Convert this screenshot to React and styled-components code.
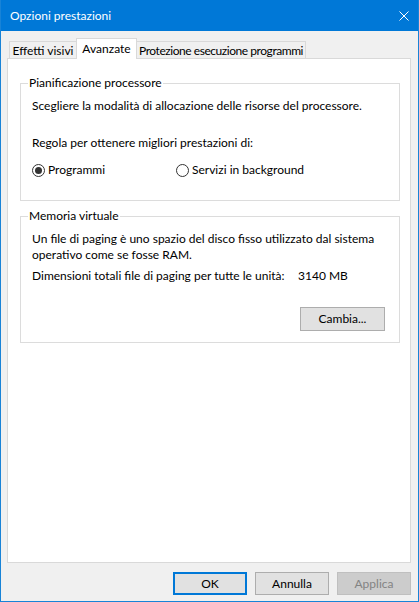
import React from "react";
import styled, { createGlobalStyle, css } from "styled-components";

const UI_FONT = `Lato, "Noto Sans", "Liberation Sans", sans-serif`;

const GlobalStyle = createGlobalStyle`
  * { box-sizing: border-box; }
  html, body { margin: 0; padding: 0; background: #f0f0f0; }
  body { font-family: ${UI_FONT}; font-size: 12px; color: #000; }
`;

const Window = styled.div`
  width: 419px;
  height: 602px;
  display: flex;
  flex-direction: column;
  background: #f0f0f0;
  border: 1px solid #1883d7;
  border-top: none;
`;

const TitleBar = styled.div`
  height: 31px;
  flex: none;
  display: flex;
  align-items: center;
  justify-content: space-between;
  padding-left: 9px;
  background: #0078d7;
  color: #fff;
  line-height: 16px;
`;

const CloseButton = styled.div`
  width: 29px;
  height: 31px;
  display: flex;
  align-items: center;
  justify-content: center;
`;

const Body = styled.div`
  flex: 1;
  display: flex;
  flex-direction: column;
  padding: 7px 7px 0 6px;
`;

const TabRow = styled.div`
  height: 20px;
  display: flex;
  align-items: flex-end;
  padding-left: 2px;
`;

const Tab = styled.div`
  width: ${({ $w }) => $w}px;
  height: 17px;
  padding-top: 1px;
  line-height: 16px;
  letter-spacing: ${({ $tight }) => ($tight ? "-0.45px" : "normal")};
  text-align: center;
  white-space: nowrap;
  overflow: hidden;
  background: #f0f0f0;
  border: 1px solid #d9d9d9;
  border-bottom: none;
  & + & { margin-left: -1px; }

  ${({ $active }) =>
    $active &&
    css`
      height: 21px;
      padding-top: 2px;
      margin-bottom: -1px;
      background: #fff;
      position: relative;
      z-index: 1;
    `}
`;

const Panel = styled.div`
  flex: 1;
  display: flex;
  flex-direction: column;
  gap: 8px;
  background: #fff;
  border: 1px solid #d9d9d9;
  padding: 17px 10px 0 12px;
`;

const Group = styled.fieldset`
  margin: 0;
  border: 1px solid #dcdcdc;
  padding: 8px 14px ${({ $pb }) => $pb}px 11px;
  min-width: 0;
`;

const Legend = styled.legend`
  padding: 0 1px;
  margin-left: -4px;
  line-height: 14px;
`;

const Text = styled.div`
  line-height: 16px;
  margin-top: ${({ $mt }) => $mt || 0}px;
  white-space: nowrap;
`;

const RadioRow = styled.div`
  display: flex;
  margin-top: 11px;
  line-height: 16px;
`;

const RadioLabel = styled.label`
  width: 144px;
  display: flex;
  align-items: center;
  gap: 3px;
  white-space: nowrap;
`;

const RadioCircle = styled.span`
  width: 13px;
  height: 13px;
  flex: none;
  border: 1px solid #333;
  border-radius: 50%;
  background: #fff;
  display: flex;
  align-items: center;
  justify-content: center;

  &::after {
    content: "";
    width: 7px;
    height: 7px;
    border-radius: 50%;
    background: ${({ $checked }) => ($checked ? "#333" : "transparent")};
  }
`;

const InfoRow = styled.div`
  display: flex;
  margin-top: 5px;
  line-height: 16px;
  white-space: nowrap;
`;

const InfoLabel = styled.span`
  width: 266px;
`;

const ButtonRight = styled.div`
  display: flex;
  justify-content: flex-end;
  margin-top: 23px;
`;

const Button = styled.button`
  width: ${({ $w }) => $w || 74}px;
  height: ${({ $h }) => $h || 23}px;
  padding: 0;
  font: inherit;
  line-height: 16px;
  color: #000;
  background: #e1e1e1;
  border: 1px solid #adadad;

  ${({ $primary }) =>
    $primary &&
    css`
      border: 2px solid #0078d7;
    `}

  &:disabled {
    color: #838383;
    background: #cccccc;
    border-color: #bfbfbf;
  }
`;

const Footer = styled.div`
  display: flex;
  justify-content: flex-end;
  gap: 8px;
  padding: 9px 0 6px;
`;

const App = () => {
  return (
    <>
      <GlobalStyle />
      <Window>
        <TitleBar>
          <span>Opzioni prestazioni</span>
          <CloseButton>
            <svg width="10" height="10" viewBox="0 0 10 10">
              <path d="M0.5 0.5 L9.5 9.5 M9.5 0.5 L0.5 9.5" stroke="#fff" strokeWidth="1" />
            </svg>
          </CloseButton>
        </TitleBar>
        <Body>
          <TabRow>
            <Tab $w={68}>Effetti visivi</Tab>
            <Tab $w={61} $active>Avanzate</Tab>
            <Tab $w={170} $tight>Protezione esecuzione programmi</Tab>
          </TabRow>
          <Panel>
            <Group $pb={22}>
              <Legend>Pianificazione processore</Legend>
              <Text>Scegliere la modalità di allocazione delle risorse del processore.</Text>
              <Text $mt={21}>Regola per ottenere migliori prestazioni di:</Text>
              <RadioRow>
                <RadioLabel>
                  <RadioCircle $checked />
                  Programmi
                </RadioLabel>
                <RadioLabel>
                  <RadioCircle />
                  Servizi in background
                </RadioLabel>
              </RadioRow>
            </Group>
            <Group $pb={11}>
              <Legend>Memoria virtuale</Legend>
              <Text>
                Un file di paging è uno spazio del disco fisso utilizzato dal sistema
                <br />
                operativo come se fosse RAM.
              </Text>
              <InfoRow>
                <InfoLabel>Dimensioni totali file di paging per tutte le unità:</InfoLabel>
                <span>3140 MB</span>
              </InfoRow>
              <ButtonRight>
                <Button $w={85} $h={24}>Cambia...</Button>
              </ButtonRight>
            </Group>
          </Panel>
          <Footer>
            <Button $primary>OK</Button>
            <Button>Annulla</Button>
            <Button disabled>Applica</Button>
          </Footer>
        </Body>
      </Window>
    </>
  );
};

export default App;
